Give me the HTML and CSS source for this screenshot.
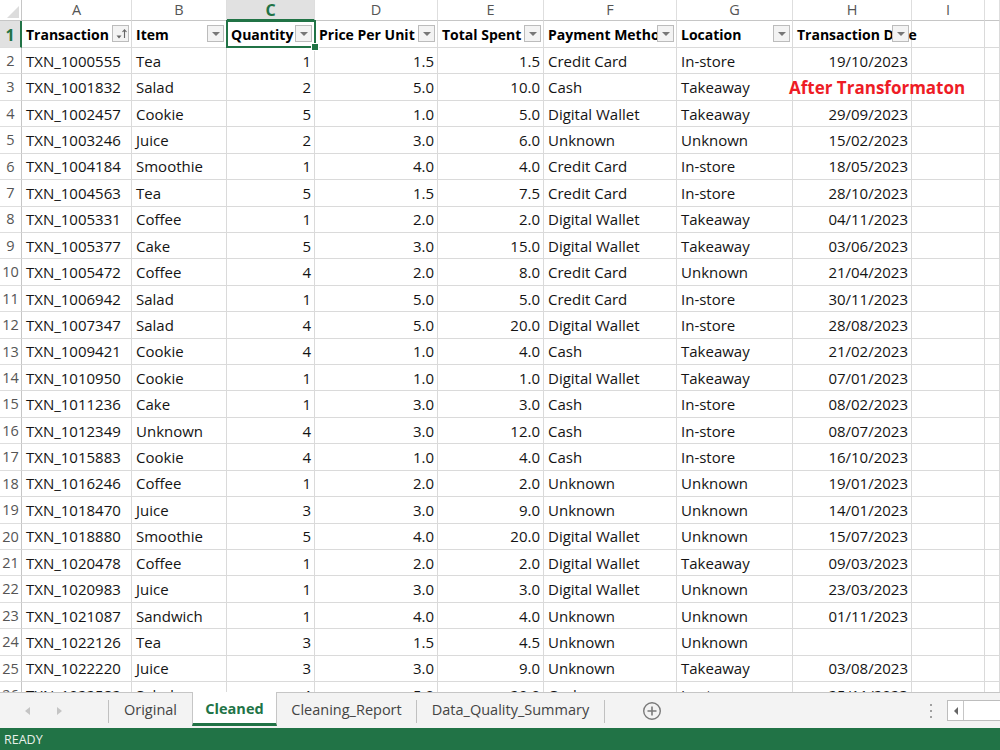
FILE: index.html
```html
<!DOCTYPE html>
<html>
<head>
<meta charset="utf-8">
<link rel="stylesheet" href="styles.css">
</head>
<body>
<div class="sheet">
  <div class="row colhead">
    <span class="corner"><span class="tri"></span></span>
    <span class="ch">A</span><span class="ch">B</span><span class="ch sel">C</span><span class="ch">D</span><span class="ch">E</span><span class="ch">F</span><span class="ch">G</span><span class="ch">H</span><span class="ch">I</span><span class="ch"></span>
  </div>
  <div class="row r1">
    <span class="rh sel">1</span>
    <span class="c h">Transaction ID<span class="fb sorted"><svg width="14" height="14" viewBox="0 0 14 14"><path d="M2.5 8.5h5l-2.5 3z" fill="#666"/><path d="M10.5 11V3M8.5 5l2-2.2 2 2.2" stroke="#666" stroke-width="1.1" fill="none"/></svg></span></span>
    <span class="c h">Item<span class="fb"></span></span>
    <span class="c h active">Quantity<span class="fb"></span><span class="handle"></span></span>
    <span class="c h">Price Per Unit<span class="fb"></span></span>
    <span class="c h">Total Spent<span class="fb"></span></span>
    <span class="c h">Payment Method<span class="fb"></span></span>
    <span class="c h">Location<span class="fb"></span></span>
    <span class="c h spill">Transaction Date<span class="fb"></span></span>
    <span class="c"></span><span class="c"></span>
  </div>
  <div class="row"><span class="rh">2</span><span class="c">TXN_1000555</span><span class="c">Tea</span><span class="c n">1</span><span class="c n">1.5</span><span class="c n">1.5</span><span class="c">Credit Card</span><span class="c">In-store</span><span class="c n">19/10/2023</span><span class="c"></span><span class="c"></span></div>
  <div class="row"><span class="rh">3</span><span class="c">TXN_1001832</span><span class="c">Salad</span><span class="c n">2</span><span class="c n">5.0</span><span class="c n">10.0</span><span class="c">Cash</span><span class="c">Takeaway</span><span class="c note-cell"><span class="note">After Transformaton</span></span><span class="c"></span><span class="c"></span></div>
  <div class="row"><span class="rh">4</span><span class="c">TXN_1002457</span><span class="c">Cookie</span><span class="c n">5</span><span class="c n">1.0</span><span class="c n">5.0</span><span class="c">Digital Wallet</span><span class="c">Takeaway</span><span class="c n">29/09/2023</span><span class="c"></span><span class="c"></span></div>
  <div class="row"><span class="rh">5</span><span class="c">TXN_1003246</span><span class="c">Juice</span><span class="c n">2</span><span class="c n">3.0</span><span class="c n">6.0</span><span class="c">Unknown</span><span class="c">Unknown</span><span class="c n">15/02/2023</span><span class="c"></span><span class="c"></span></div>
  <div class="row"><span class="rh">6</span><span class="c">TXN_1004184</span><span class="c">Smoothie</span><span class="c n">1</span><span class="c n">4.0</span><span class="c n">4.0</span><span class="c">Credit Card</span><span class="c">In-store</span><span class="c n">18/05/2023</span><span class="c"></span><span class="c"></span></div>
  <div class="row"><span class="rh">7</span><span class="c">TXN_1004563</span><span class="c">Tea</span><span class="c n">5</span><span class="c n">1.5</span><span class="c n">7.5</span><span class="c">Credit Card</span><span class="c">In-store</span><span class="c n">28/10/2023</span><span class="c"></span><span class="c"></span></div>
  <div class="row"><span class="rh">8</span><span class="c">TXN_1005331</span><span class="c">Coffee</span><span class="c n">1</span><span class="c n">2.0</span><span class="c n">2.0</span><span class="c">Digital Wallet</span><span class="c">Takeaway</span><span class="c n">04/11/2023</span><span class="c"></span><span class="c"></span></div>
  <div class="row"><span class="rh">9</span><span class="c">TXN_1005377</span><span class="c">Cake</span><span class="c n">5</span><span class="c n">3.0</span><span class="c n">15.0</span><span class="c">Digital Wallet</span><span class="c">Takeaway</span><span class="c n">03/06/2023</span><span class="c"></span><span class="c"></span></div>
  <div class="row"><span class="rh">10</span><span class="c">TXN_1005472</span><span class="c">Coffee</span><span class="c n">4</span><span class="c n">2.0</span><span class="c n">8.0</span><span class="c">Credit Card</span><span class="c">Unknown</span><span class="c n">21/04/2023</span><span class="c"></span><span class="c"></span></div>
  <div class="row"><span class="rh">11</span><span class="c">TXN_1006942</span><span class="c">Salad</span><span class="c n">1</span><span class="c n">5.0</span><span class="c n">5.0</span><span class="c">Credit Card</span><span class="c">In-store</span><span class="c n">30/11/2023</span><span class="c"></span><span class="c"></span></div>
  <div class="row"><span class="rh">12</span><span class="c">TXN_1007347</span><span class="c">Salad</span><span class="c n">4</span><span class="c n">5.0</span><span class="c n">20.0</span><span class="c">Digital Wallet</span><span class="c">In-store</span><span class="c n">28/08/2023</span><span class="c"></span><span class="c"></span></div>
  <div class="row"><span class="rh">13</span><span class="c">TXN_1009421</span><span class="c">Cookie</span><span class="c n">4</span><span class="c n">1.0</span><span class="c n">4.0</span><span class="c">Cash</span><span class="c">Takeaway</span><span class="c n">21/02/2023</span><span class="c"></span><span class="c"></span></div>
  <div class="row"><span class="rh">14</span><span class="c">TXN_1010950</span><span class="c">Cookie</span><span class="c n">1</span><span class="c n">1.0</span><span class="c n">1.0</span><span class="c">Digital Wallet</span><span class="c">Takeaway</span><span class="c n">07/01/2023</span><span class="c"></span><span class="c"></span></div>
  <div class="row"><span class="rh">15</span><span class="c">TXN_1011236</span><span class="c">Cake</span><span class="c n">1</span><span class="c n">3.0</span><span class="c n">3.0</span><span class="c">Cash</span><span class="c">In-store</span><span class="c n">08/02/2023</span><span class="c"></span><span class="c"></span></div>
  <div class="row"><span class="rh">16</span><span class="c">TXN_1012349</span><span class="c">Unknown</span><span class="c n">4</span><span class="c n">3.0</span><span class="c n">12.0</span><span class="c">Cash</span><span class="c">In-store</span><span class="c n">08/07/2023</span><span class="c"></span><span class="c"></span></div>
  <div class="row"><span class="rh">17</span><span class="c">TXN_1015883</span><span class="c">Cookie</span><span class="c n">4</span><span class="c n">1.0</span><span class="c n">4.0</span><span class="c">Cash</span><span class="c">In-store</span><span class="c n">16/10/2023</span><span class="c"></span><span class="c"></span></div>
  <div class="row"><span class="rh">18</span><span class="c">TXN_1016246</span><span class="c">Coffee</span><span class="c n">1</span><span class="c n">2.0</span><span class="c n">2.0</span><span class="c">Unknown</span><span class="c">Unknown</span><span class="c n">19/01/2023</span><span class="c"></span><span class="c"></span></div>
  <div class="row"><span class="rh">19</span><span class="c">TXN_1018470</span><span class="c">Juice</span><span class="c n">3</span><span class="c n">3.0</span><span class="c n">9.0</span><span class="c">Unknown</span><span class="c">Unknown</span><span class="c n">14/01/2023</span><span class="c"></span><span class="c"></span></div>
  <div class="row"><span class="rh">20</span><span class="c">TXN_1018880</span><span class="c">Smoothie</span><span class="c n">5</span><span class="c n">4.0</span><span class="c n">20.0</span><span class="c">Digital Wallet</span><span class="c">Unknown</span><span class="c n">15/07/2023</span><span class="c"></span><span class="c"></span></div>
  <div class="row"><span class="rh">21</span><span class="c">TXN_1020478</span><span class="c">Coffee</span><span class="c n">1</span><span class="c n">2.0</span><span class="c n">2.0</span><span class="c">Digital Wallet</span><span class="c">Takeaway</span><span class="c n">09/03/2023</span><span class="c"></span><span class="c"></span></div>
  <div class="row"><span class="rh">22</span><span class="c">TXN_1020983</span><span class="c">Juice</span><span class="c n">1</span><span class="c n">3.0</span><span class="c n">3.0</span><span class="c">Digital Wallet</span><span class="c">Unknown</span><span class="c n">23/03/2023</span><span class="c"></span><span class="c"></span></div>
  <div class="row"><span class="rh">23</span><span class="c">TXN_1021087</span><span class="c">Sandwich</span><span class="c n">1</span><span class="c n">4.0</span><span class="c n">4.0</span><span class="c">Unknown</span><span class="c">Unknown</span><span class="c n">01/11/2023</span><span class="c"></span><span class="c"></span></div>
  <div class="row"><span class="rh">24</span><span class="c">TXN_1022126</span><span class="c">Tea</span><span class="c n">3</span><span class="c n">1.5</span><span class="c n">4.5</span><span class="c">Unknown</span><span class="c">Unknown</span><span class="c n"></span><span class="c"></span><span class="c"></span></div>
  <div class="row"><span class="rh">25</span><span class="c">TXN_1022220</span><span class="c">Juice</span><span class="c n">3</span><span class="c n">3.0</span><span class="c n">9.0</span><span class="c">Unknown</span><span class="c">Takeaway</span><span class="c n">03/08/2023</span><span class="c"></span><span class="c"></span></div>
  <div class="row"><span class="rh">26</span><span class="c">TXN_1022582</span><span class="c">Salad</span><span class="c n">4</span><span class="c n">5.0</span><span class="c n">20.0</span><span class="c">Cash</span><span class="c">In-store</span><span class="c n">25/11/2023</span><span class="c"></span><span class="c"></span></div>
</div>
<div class="tabbar">
  <div class="nav">
    <span class="arrow left"></span>
    <span class="arrow right"></span>
  </div>
  <span class="sep"></span>
  <span class="tab w-orig">Original</span>
  <span class="tab active w-clean">Cleaned</span>
  <span class="tab w-report">Cleaning_Report</span>
  <span class="sep"></span>
  <span class="tab w-dqs">Data_Quality_Summary</span>
  <span class="sep"></span>
  <span class="add"><svg width="20" height="20" viewBox="0 0 20 20"><circle cx="10" cy="10" r="8.3" fill="none" stroke="#7a7a7a" stroke-width="1.4"/><path d="M10 5.5v9M5.5 10h9" stroke="#7a7a7a" stroke-width="1.6"/></svg></span>
  <span class="spacer"></span>
  <span class="dots"><i></i><i></i><i></i></span>
  <span class="hscroll"><span class="hs-btn"></span><span class="hs-thumb"></span></span>
</div>
<div class="status">READY</div>
</body>
</html>
```

FILE: styles.css
```css
html, body {
  margin: 0;
  padding: 0;
  background: #ffffff;
}

body {
  width: 1000px;
  height: 750px;
  overflow: hidden;
  font-family: "Open Sans", "Noto Sans", sans-serif;
  color: #111;
}

.sheet {
  height: 692px;
  overflow: hidden;
  position: relative;
}

.row {
  display: grid;
  grid-template-columns: 22px 110px 95px 88px 123px 106px 133px 116px 119px 73px 1fr;
  height: 26.43px;
  box-sizing: border-box;
}

.colhead {
  height: 21px;
}

.r1 {
  height: 27px;
}

.c, .rh, .ch, .corner {
  box-sizing: border-box;
  border-right: 1px solid #dadada;
  border-bottom: 1px solid #dadada;
  display: flex;
  align-items: center;
  white-space: nowrap;
  overflow: hidden;
  line-height: 1;
}

.c {
  padding: 1px 3px 0 4px;
  font-size: 15px;
  color: #141414;
}

.c.n {
  justify-content: flex-end;
}

.corner {
  position: relative;
  background: #ffffff;
  border-right: 1px solid #c6c6c6;
  border-bottom: 1px solid #c6c6c6;
}

.corner .tri {
  position: absolute;
  right: 2px;
  bottom: 2px;
  width: 0;
  height: 0;
  border-left: 12px solid transparent;
  border-bottom: 12px solid #dcdcdc;
}

.ch {
  justify-content: center;
  font-size: 14.5px;
  color: #555;
  background: #ffffff;
  border-bottom: 1px solid #c6c6c6;
  border-right: 1px solid #dedede;
}

.ch.sel {
  background: #e1e1e1;
  color: #217346;
  font-weight: bold;
  font-size: 16px;
  border-bottom: 2px solid #217346;
}

.rh {
  justify-content: center;
  font-size: 14.5px;
  color: #555;
  background: #ffffff;
  border-right: 1px solid #c6c6c6;
  border-bottom: 1px solid #dedede;
  padding-top: 1px;
}

.rh.sel {
  background: #e1e1e1;
  color: #217346;
  font-size: 16px;
  font-weight: bold;
  border-right: 2px solid #217346;
}

.c.h {
  position: relative;
  font-weight: bold;
  font-size: 14px;
  color: #000;
}

.c.h.spill {
  overflow: visible;
  z-index: 2;
}

.c.active {
  overflow: visible;
  z-index: 3;
}

.c.active::before {
  content: "";
  position: absolute;
  left: -1px;
  top: -1px;
  right: -2px;
  bottom: -1px;
  border: 2px solid #217346;
  pointer-events: none;
}

.handle {
  position: absolute;
  right: -5px;
  bottom: -4px;
  width: 6px;
  height: 6px;
  background: #217346;
  border: 1px solid #fff;
  z-index: 4;
}

.fb {
  position: absolute;
  right: 2px;
  top: 4px;
  width: 17px;
  height: 17px;
  box-sizing: border-box;
  border: 1px solid #bcbcbc;
  background: #f3f3f3;
  display: flex;
  align-items: center;
  justify-content: center;
}

.fb::after {
  content: "";
  width: 0;
  height: 0;
  border-left: 4px solid transparent;
  border-right: 4px solid transparent;
  border-top: 4px solid #777;
  margin-top: 1px;
}

.fb.sorted::after {
  display: none;
}

.note-cell {
  position: relative;
  overflow: visible;
  z-index: 2;
}

.note {
  position: absolute;
  left: -4px;
  top: 50%;
  transform: translateY(-50%);
  color: #ee1c25;
  font-weight: bold;
  font-size: 17px;
  white-space: nowrap;
}

/* sheet tabs */
.tabbar {
  height: 36px;
  box-sizing: border-box;
  background: #f3f3f3;
  border-top: 1px solid #c6c6c6;
  display: flex;
  align-items: stretch;
}

.nav {
  width: 108px;
  display: flex;
  align-items: center;
}

.arrow {
  width: 0;
  height: 0;
  border-top: 4px solid transparent;
  border-bottom: 4px solid transparent;
}

.arrow.left {
  border-right: 5px solid #c4c4c4;
  margin-left: 25px;
}

.arrow.right {
  border-left: 5px solid #c4c4c4;
  margin-left: 27px;
}

.sep {
  width: 1px;
  background: #c0c0c0;
  margin: 7px 0 5px;
}

.tab {
  display: flex;
  align-items: center;
  justify-content: center;
  font-size: 14.5px;
  color: #444;
  box-sizing: border-box;
  padding-bottom: 2px;
}

.w-orig { width: 83px; }
.w-clean { width: 85px; }
.w-report { width: 139px; }
.w-dqs { width: 187px; }

.tab.active {
  background: #ffffff;
  color: #217346;
  font-weight: bold;
  font-size: 14.5px;
  border-left: 1px solid #c6c6c6;
  border-right: 1px solid #c6c6c6;
  border-bottom: 3px solid #217346;
  margin-top: -1px;
  margin-bottom: 2px;
  padding-top: 2px;
  padding-bottom: 0;
}

.add {
  width: 94px;
  display: flex;
  align-items: center;
  justify-content: center;
}

.spacer {
  flex: 1;
}

.dots {
  width: 6px;
  display: flex;
  flex-direction: column;
  justify-content: center;
  align-items: center;
  gap: 4px;
  margin-right: 13px;
}

.dots i {
  width: 2px;
  height: 2px;
  background: #a0a0a0;
}

.hscroll {
  width: 53px;
  margin: 7px 0 7px;
  box-sizing: border-box;
  border: 1px solid #bdbdbd;
  border-right: none;
  background: #ffffff;
  display: flex;
}

.hs-btn {
  width: 15px;
  border-right: 1px solid #c6c6c6;
  display: flex;
  align-items: center;
  justify-content: center;
}

.hs-btn::after {
  content: "";
  width: 0;
  height: 0;
  border-top: 4px solid transparent;
  border-bottom: 4px solid transparent;
  border-right: 4px solid #666;
}

.hs-thumb {
  flex: 1;
}

.status {
  height: 22px;
  background: #217346;
  color: #e8f0ea;
  font-size: 12.5px;
  display: flex;
  align-items: center;
  padding-left: 4px;
  padding-top: 1px;
  box-sizing: border-box;
}
```
